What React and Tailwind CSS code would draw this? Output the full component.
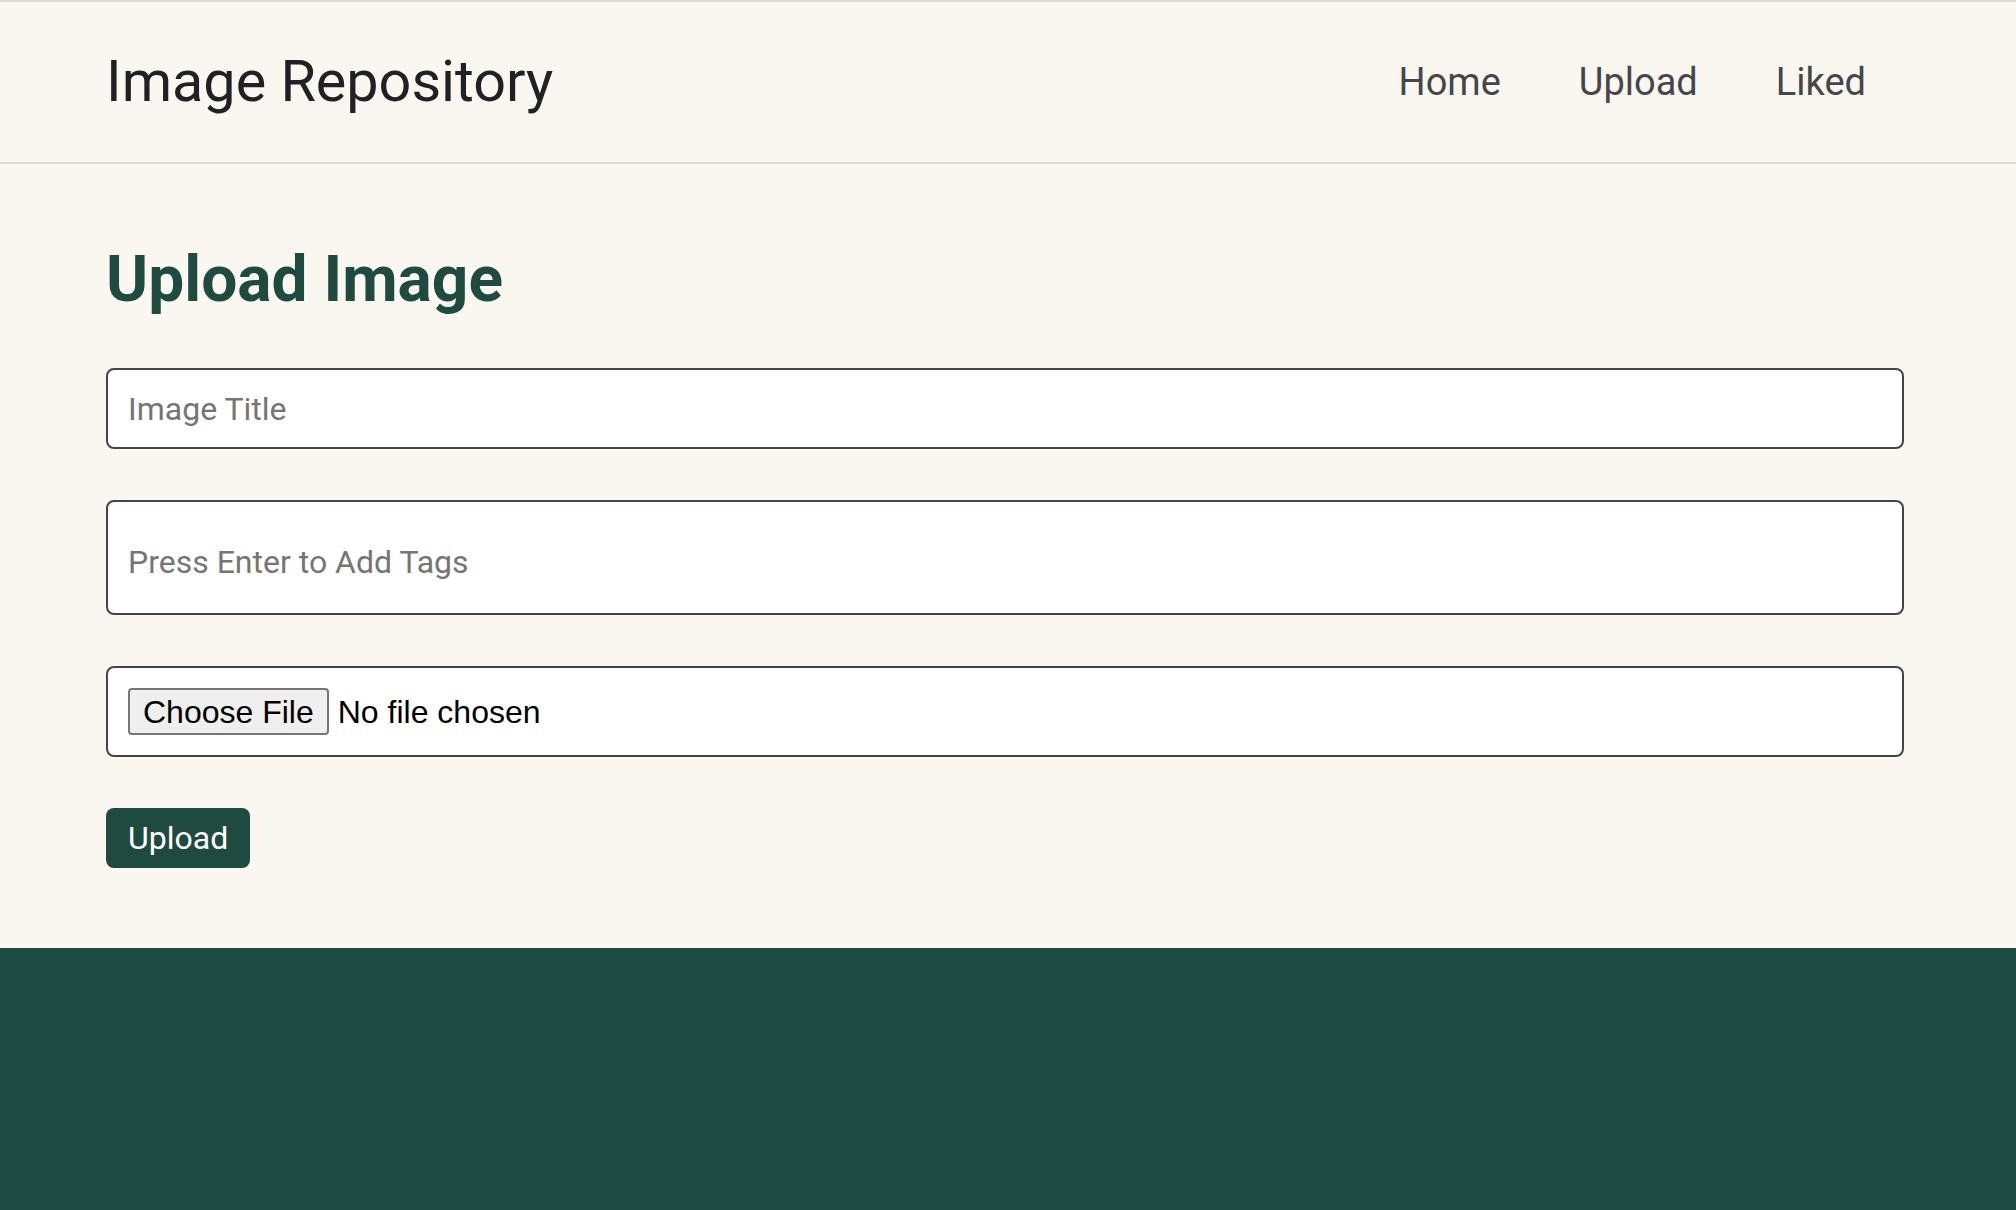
import React, { useState } from 'react';

const links = ['Home', 'Upload', 'Liked'];

const App = () => {
  const [title, setTitle] = useState('');
  const [tag, setTag] = useState('');
  const [tags, setTags] = useState([]);

  const onTagKey = (e) => {
    if (e.key === 'Enter' && tag.trim()) {
      e.preventDefault();
      setTags([...tags, tag.trim()]);
      setTag('');
    }
  };

  return (
    <div className="min-h-screen flex flex-col bg-[#f9f7f0] font-['Roboto',sans-serif]">
      {/* Header */}
      <header className="border-t-2 border-b-2 border-[#d9d9d9]">
        <div className="h-[160px] flex items-center justify-between pl-[106px] pr-[111px]">
          <h1 className="text-[57.5px] text-[#212125] font-normal">Image Repository</h1>
          <nav className="flex">
            {links.map((l) => (
              <a key={l} href="#" className="px-[39px] text-[38px] text-[#45464b]">
                {l}
              </a>
            ))}
          </nav>
        </div>
      </header>

      {/* Upload form */}
      <main className="pl-[106px] pr-[112px] pt-[78px] pb-[80px]">
        <h2 className="text-[64px] leading-[75px] font-bold text-[#1e4a40]">Upload Image</h2>
        <form className="mt-[51px] flex flex-col" onSubmit={(e) => e.preventDefault()}>
          <input
            type="text"
            value={title}
            onChange={(e) => setTitle(e.target.value)}
            placeholder="Image Title"
            className="w-full h-[81px] px-[20px] bg-white border-2 border-[#444448] rounded-[8px] text-[32px] text-[#222] placeholder:text-[#757575] outline-none"
          />
          <div className="mt-[51px] w-full h-[115px] px-[20px] pt-[8px] bg-white border-2 border-[#444448] rounded-[8px] flex items-center gap-3">
            {tags.map((t) => (
              <span key={t} className="px-3 py-1 rounded-md bg-[#1e4a40] text-white text-[24px]">{t}</span>
            ))}
            <input
              type="text"
              value={tag}
              onChange={(e) => setTag(e.target.value)}
              onKeyDown={onTagKey}
              placeholder="Press Enter to Add Tags"
              className="flex-1 text-[32px] text-[#222] placeholder:text-[#757575] outline-none bg-transparent"
            />
          </div>
          <div className="mt-[51px] w-full h-[91px] px-[20px] bg-white border-2 border-[#444448] rounded-[8px] flex items-center">
            <input
              type="file"
              className="h-[48px] leading-[48px] font-['Liberation_Sans',Arial,sans-serif] text-[32px] text-black file:font-['Liberation_Sans',Arial,sans-serif] file:text-[32px] file:leading-[38px] file:h-[47px] file:px-[13px] file:mr-[9px] file:bg-[#efefef] file:border-2 file:border-solid file:border-[#767676] file:rounded-[4px] file:text-black"
            />
          </div>
          <div className="mt-[51px]">
            <button
              type="submit"
              className="h-[60px] px-[22px] rounded-[8px] bg-[#1e4a40] text-white text-[32px]"
            >
              Upload
            </button>
          </div>
        </form>
      </main>

      {/* Footer */}
      <footer className="flex-1 bg-[#1e4a41]" />
    </div>
  );
};

export default App;
